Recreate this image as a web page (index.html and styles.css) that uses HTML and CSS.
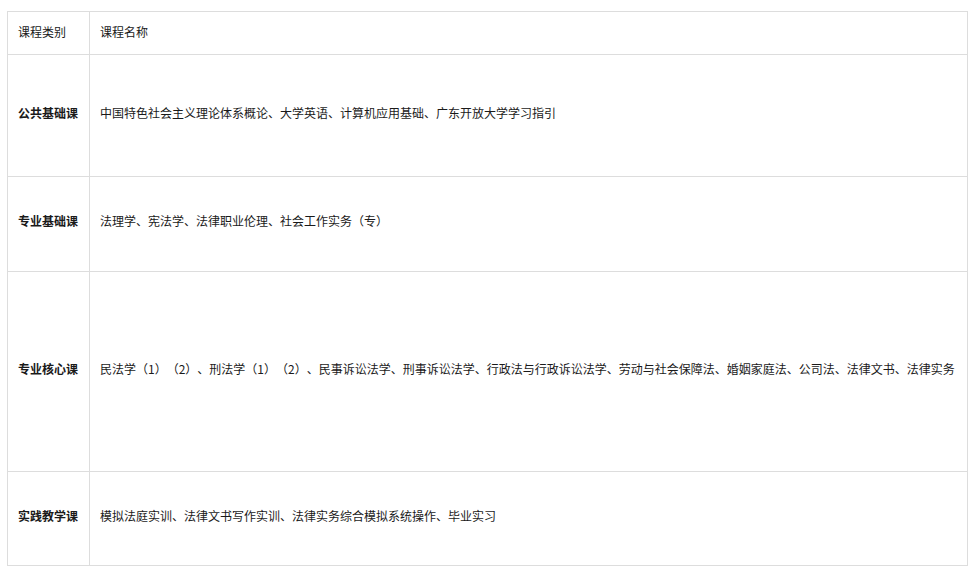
FILE: index.html
```html
<!DOCTYPE html>
<html lang="zh-CN">
<head>
<meta charset="utf-8">
<title>课程设置</title>
<link rel="stylesheet" href="styles.css">
</head>
<body>
<table class="course-table">
  <tr class="row-head">
    <td class="col-type">课程类别</td>
    <td class="col-name">课程名称</td>
  </tr>
  <tr class="row-1">
    <td class="col-type strong">公共基础课</td>
    <td class="col-name">中国特色社会主义理论体系概论、大学英语、计算机应用基础、广东开放大学学习指引</td>
  </tr>
  <tr class="row-2">
    <td class="col-type strong">专业基础课</td>
    <td class="col-name">法理学、宪法学、法律职业伦理、社会工作实务（专）</td>
  </tr>
  <tr class="row-3">
    <td class="col-type strong">专业核心课</td>
    <td class="col-name">民法学（1）（2）、刑法学（1）（2）、民事诉讼法学、刑事诉讼法学、行政法与行政诉讼法学、劳动与社会保障法、婚姻家庭法、公司法、法律文书、法律实务</td>
  </tr>
  <tr class="row-4">
    <td class="col-type strong">实践教学课</td>
    <td class="col-name">模拟法庭实训、法律文书写作实训、法律实务综合模拟系统操作、毕业实习</td>
  </tr>
</table>
</body>
</html>
```
FILE: styles.css
```css
html, body {
  margin: 0;
  padding: 0;
  background: #fff;
}
body {
  font-family: "Microsoft YaHei", "Noto Sans CJK SC", "Noto Sans", sans-serif;
  font-size: 12px;
  color: #1a1a1a;
  text-spacing-trim: space-all;
}
.course-table {
  margin: 11px 0 0 7px;
  width: 961px;
  border-collapse: collapse;
  table-layout: fixed;
}
.course-table td {
  border: 1px solid #ddd;
  padding: 0 10px 6px;
  vertical-align: middle;
  line-height: 16px;
  white-space: nowrap;
}
.course-table .row-head td {
  padding-bottom: 2px;
}
.col-type {
  width: 61px;
}
.strong {
  font-weight: bold;
}
.row-head td { height: 40px; }
.row-1 td { height: 115px; }
.row-2 td { height: 88px; }
.row-3 td { height: 193px; }
.row-4 td { height: 87px; }
```
